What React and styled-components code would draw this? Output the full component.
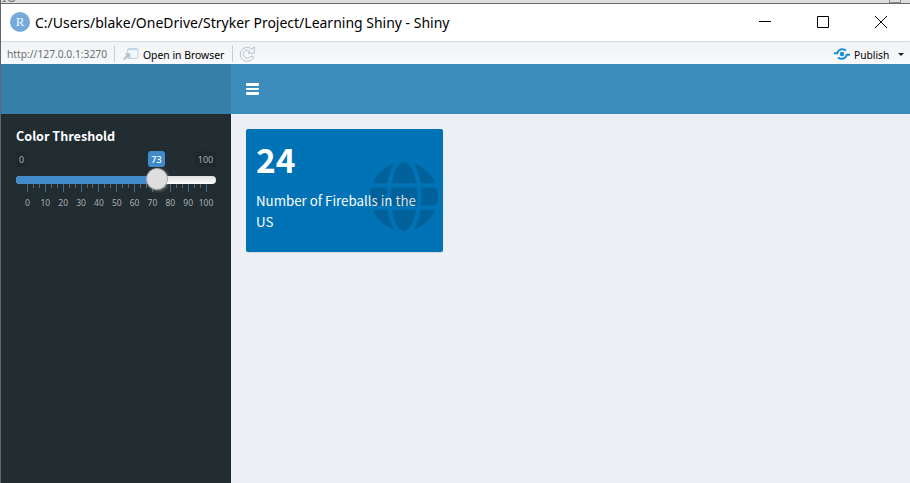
import React from "react";
import styled, { createGlobalStyle } from "styled-components";

const Global = createGlobalStyle`
  * { box-sizing: border-box; }
  body { margin: 0; overflow: hidden; background: #ecf0f5; }
`;
const ui = `"Noto Sans", "Open Sans", sans-serif`;
const source = `"Noto Sans CJK SC", "Noto Sans", sans-serif`;

const Window = styled.div`
  width: 910px; height: 483px; display: flex; flex-direction: column;
  border-left: 1px solid #5f676b; font-family: ${ui}; overflow: hidden;
`;
const Behind = styled.div`
  height: 4px; flex: none; margin-left: -1px; background: #dedede; border-bottom: 1px solid #6b6b6b;
  display: flex; justify-content: flex-end; padding-right: 9px; overflow: hidden;
`;
const BehindCorner = styled.span`
  width: 12px; height: 3px; border: 1px solid #8a8a8a; border-top: 0;
`;
const BehindText = styled.span`
  margin-right: auto; margin-left: 2px; font-size: 13px; line-height: 14px; margin-top: -10px; color: #777;
`;
const TitleBar = styled.div`
  height: 37px; flex: none; background: #fff; display: flex; align-items: center; padding-left: 9px;
`;
const Badge = styled.span`
  width: 20px; height: 20px; border-radius: 50%; background: #75aadb; color: #f2f8fd;
  font: 13px/20px "Liberation Serif", serif; text-align: center; margin: -1px 5px 0 0;
`;
const Text = styled.span`
  font-size: ${p => p.$size}px; color: ${p => p.$color || "#000"}; white-space: nowrap;
  display: inline-block; flex: none; width: ${p => p.$w}px; line-height: 20px;
  margin-top: ${p => p.$mt || 0}px; margin-left: ${p => p.$ml || 0}px;
  transform: scaleX(${p => p.$sx || 1}); transform-origin: left;
`;
const Controls = styled.div`
  margin: -2px 0 0 auto; display: flex; align-items: center; gap: 46px; padding-right: 23px;
  svg { display: block; }
`;
const Toolbar = styled.div`
  height: 23px; flex: none; display: flex; align-items: center; padding: 1px 6px 0;
  background: linear-gradient(#f1f3f5, #f8f9fa); border-top: 1px solid #d6dadc;
  svg { flex: none; }
`;
const Divider = styled.span`
  width: 1px; height: 16px; flex: none; background: #c9cdd1; margin: 0 ${p => p.$mr}px 0 ${p => p.$ml}px;
`;
const Push = styled.span`flex: 1;`;
const Caret = styled.i`
  border: 3px solid transparent; border-top-color: #222; border-bottom: 0; margin: 2px 0 0 8px;
`;
const Header = styled.div`
  height: 50px; flex: none; display: flex; background: #3c8dbc;
`;
const Logo = styled.div`width: 230px; background: #367fa9;`;
const Menu = styled.div`
  display: flex; flex-direction: column; gap: 2px; padding: 19px 15px;
`;
const MenuBar = styled.i`width: 13px; height: 3px; background: #fff; border-radius: 1px;`;
const Body = styled.div`flex: 1; display: flex;`;
const Sidebar = styled.aside`
  width: 230px; background: #222d32; padding: 12px 15px 0;
`;
const Label = styled.div`
  font: 700 12.6px/20px ${source}; color: #fff;
`;
const Slider = styled.div`
  width: 200px; position: relative; height: 64px; margin-top: 5px;
  font: 9px/13px "Noto Sans", sans-serif; color: #a6adb0;
`;
const Tag = styled.span`
  position: absolute; left: ${p => p.$x}px; top: 0; width: ${p => p.$w}px; height: 16px; line-height: 17px;
  text-align: center; border-radius: 3px; font-size: 9px; font-weight: ${p => p.$on ? 500 : 400};
  background: ${p => p.$on ? "#428bca" : "#1f282c"}; color: ${p => p.$on ? "#fff" : "#a6adb0"};
`;
const Track = styled.div`
  position: absolute; top: 25px; left: 0; width: 200px; height: 8px; border-radius: 4px;
  background: linear-gradient(#dedede, #fff); overflow: hidden;
`;
const Fill = styled.div`height: 8px; width: 140px; background: #428bca;`;
const Handle = styled.div`
  position: absolute; left: 130px; top: 17px; width: 22px; height: 22px; border-radius: 50%;
  background: #dedede; border: 1px solid #ababab; box-shadow: 1px 1px 3px rgba(255,255,255,.3);
`;
const Tick = styled.i`
  position: absolute; left: ${p => p.$x}px; top: 33px; width: 1px; height: ${p => p.$major ? 8 : 4}px;
  background: ${p => p.$major ? "#3f6a86" : "#5c676c"};
`;
const Num = styled.span`
  position: absolute; left: ${p => p.$x - 10}px; width: 21px; top: 45px; text-align: center; font-size: 8.5px;
`;
const Content = styled.main`flex: 1; background: #ecf0f5; padding: 15px;`;
const ValueBox = styled.div`
  position: relative; width: 197px; height: 123px; border-radius: 2px; background: #0073b7;
  box-shadow: 0 1px 1px rgba(0,0,0,.1); color: #fff; padding: 10px; font-family: ${source};
`;
const Value = styled.div`font-weight: 700; font-size: 33.5px; line-height: 42px; margin: -1px 0 10px;`;
const Caption = styled.div`font-size: 13.3px; line-height: 21px; width: 177px;`;
const Globe = styled.svg`position: absolute; left: 124px; top: 33px; width: 68px; height: 69px;`;

const ticks = Array.from({ length: 31 }, (_, i) => i);

export default function App() {
  return (
    <>
      <Global />
      <Window>
        <Behind><BehindText>IO</BehindText><BehindCorner /></Behind>
        <TitleBar>
          <Badge>R</Badge>
          <Text $size={15} $w={415} $sx={0.932} $mt={-2}>C:/Users/blake/OneDrive/Stryker Project/Learning Shiny - Shiny</Text>
          <Controls>
            <svg width="12" height="12"><path d="M0 5.5h12" stroke="#000" /></svg>
            <svg width="12" height="12"><path d="M.5.5h11v11H.5z" fill="none" stroke="#000" /></svg>
            <svg width="12" height="12"><path d="M0 0l12 12M12 0L0 12" stroke="#000" /></svg>
          </Controls>
        </TitleBar>
        <Toolbar>
          <Text $size={11} $w={100} $sx={0.932} $color="#6a6e72">http://127.0.0.1:3270</Text>
          <Divider $ml={7} $mr={8} />
          <svg width="16" height="14" viewBox="0 0 16 14">
            <rect x="4.5" y="1.500" width="10.500" height="10" rx="1.5" fill="#f0f6fa" stroke="#c0d4e3" />
            <path d="M5 2.5h9.500" stroke="#c0d4e3" strokeWidth="1.500" />
            <path d="M.7 12.500l4.500-4.500M2.500 7.200h3.800v3.800" fill="none" stroke="#b4c2ce" strokeWidth="1.800" />
          </svg>
          <Text $size={11} $w={81} $sx={0.942} $ml={4} $mt={2}>Open in Browser</Text>
          <Divider $ml={8} $mr={6} />
          <svg width="16" height="16" viewBox="0 0 16 16" fill="none">
            <path
              d="M13 3.200A7 7 0 1 0 14.700 11L12 9.800A4 4 0 1 1 11 5.200L9 7.200H15.300V.8Z"
              stroke="#b3c0d0" strokeLinejoin="round"
            />
          </svg>
          <Push />
          <svg width="16" height="14" viewBox="0 0 16 14">
            <circle cx="8" cy="7" r="2.200" fill="#1a8fd6" />
            <path d="M0 6.200h3.200C4 2.500 8.500.800 12 3.500" fill="none" stroke="#1a8fd6" strokeWidth="2" />
            <path d="M16 7.800h-3.200C12 11.500 7.500 13.200 4 10.500" fill="none" stroke="#1a8fd6" strokeWidth="2" />
          </svg>
          <Text $size={11} $w={36} $sx={0.93} $ml={4} $mt={2}>Publish</Text>
          <Caret />
        </Toolbar>
        <Header>
          <Logo />
          <Menu><MenuBar /><MenuBar /><MenuBar /></Menu>
        </Header>
        <Body>
          <Sidebar>
            <Label>Color Threshold</Label>
            <Slider>
              <Tag $x={0} $w={11}>0</Tag>
              <Tag $x={179} $w={21}>100</Tag>
              <Tag $x={132} $w={17} $on>73</Tag>
              {ticks.map(i => <Tick key={i} $x={11 + Math.round(i * 5.95)} $major={i % 3 === 0} />)}
              {ticks.filter(i => i % 3 === 0).map(i => <Num key={i} $x={11 + i * 5.95}>{i / 3 * 10}</Num>)}
              <Track><Fill /></Track>
              <Handle />
            </Slider>
          </Sidebar>
          <Content>
            <ValueBox>
              <Value>24</Value>
              <Caption>Number of Fireballs in the US</Caption>
              <Globe viewBox="0 8 496 496" preserveAspectRatio="none">
                <path fill="#000" fillOpacity=".15" d="M336.500 160C322 70.700 287.800 8 248 8s-74 62.700-88.500 152h177zM152 256c0 22.200 1.200 43.500 3.300 64h185.300c2.100-20.500 3.300-41.800 3.300-64s-1.200-43.500-3.300-64H155.300c-2.100 20.500-3.300 41.800-3.300 64zm324.700-96c-28.600-67.900-86.500-120.400-158-141.600 24.400 33.800 41.200 84.700 50 141.600h108zM177.200 18.400C105.800 39.600 47.800 92.100 19.300 160h108c8.700-56.900 25.500-107.800 49.900-141.600zM487.400 192H372.700c2.100 21 3.300 42.500 3.300 64s-1.200 43-3.300 64h114.600c5.500-20.500 8.600-41.800 8.600-64s-3.100-43.500-8.500-64zM120 256c0-21.500 1.200-43 3.300-64H8.600C3.200 212.500 0 233.800 0 256s3.200 43.500 8.600 64h114.600c-2-21-3.200-42.500-3.200-64zm39.500 96c14.500 89.300 48.700 152 88.500 152s74-62.700 88.500-152h-177zm159.300 141.600c71.400-21.200 129.400-73.700 158-141.600h-108c-8.800 56.900-25.600 107.800-50 141.600zM19.300 352c28.600 67.900 86.500 120.400 158 141.600-24.400-33.800-41.200-84.700-50-141.600h-108z" />
              </Globe>
            </ValueBox>
          </Content>
        </Body>
      </Window>
    </>
  );
}
